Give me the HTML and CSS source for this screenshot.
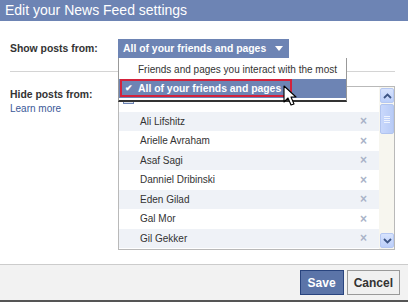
FILE: index.html
```html
<!DOCTYPE html>
<html>
<head>
<meta charset="utf-8"/>
<title>Edit your News Feed settings</title>
<link rel="stylesheet" href="styles.css">
</head>
<body>
<div class="dialog">
  <div class="dialog-title">Edit your News Feed settings</div>

  <div class="dialog-body">
    <div class="setting show-row">
      <div class="setting-label">Show posts from:</div>
      <div class="picker">
        <div class="picker-btn"><span>All of your friends and pages</span><span class="caret"></span></div>
        <ul class="picker-menu">
          <li>Friends and pages you interact with the most</li>
          <li class="selected"><span class="check">&#10004;</span><span class="selected-text">All of your friends and pages</span></li>
        </ul>
        <svg class="cursor" width="14" height="22" viewBox="0 0 14 22">
          <path d="M1 1 L1 17 L5 13 L8 20 L11 19 L8 12 L13 12 Z" fill="#fff" stroke="#000" stroke-width="1.1" stroke-linejoin="round"/>
        </svg>
      </div>
    </div>

    <div class="sep"></div>

    <div class="setting hide-row">
      <div class="setting-label">
        Hide posts from:
        <a class="learn-more" href="#">Learn more</a>
      </div>
      <div class="hidden-list">
        <div class="list-rows">
          <div class="list-row first"><span class="list-icon"></span></div>
          <div class="list-row alt"><span class="name">Ali Lifshitz</span><span class="remove">&#215;</span></div>
          <div class="list-row"><span class="name">Arielle Avraham</span><span class="remove">&#215;</span></div>
          <div class="list-row alt"><span class="name">Asaf Sagi</span><span class="remove">&#215;</span></div>
          <div class="list-row"><span class="name">Danniel Dribinski</span><span class="remove">&#215;</span></div>
          <div class="list-row alt"><span class="name">Eden Gilad</span><span class="remove">&#215;</span></div>
          <div class="list-row"><span class="name">Gal Mor</span><span class="remove">&#215;</span></div>
          <div class="list-row alt"><span class="name">Gil Gekker</span><span class="remove">&#215;</span></div>
        </div>
        <div class="scrollbar">
          <div class="scroll-btn">
            <svg width="9" height="6" viewBox="0 0 9 6"><path d="M1 5 L4.5 1.5 L8 5" fill="none" stroke="#3d5585" stroke-width="1.8"/></svg>
          </div>
          <div class="scroll-thumb"><span></span><span></span><span></span><span></span></div>
          <div class="scroll-track"></div>
          <div class="scroll-btn">
            <svg width="9" height="6" viewBox="0 0 9 6"><path d="M1 1 L4.5 4.5 L8 1" fill="none" stroke="#3d5585" stroke-width="1.8"/></svg>
          </div>
        </div>
      </div>
    </div>
  </div>

  <div class="dialog-footer">
    <button class="btn btn-save">Save</button>
    <button class="btn btn-cancel">Cancel</button>
  </div>
</div>
</body>
</html>
```

FILE: styles.css
```css
body {
    margin: 0;
    background: #fff;
    font-family: "Liberation Sans", Arial, sans-serif;
    font-size: 10px;
    color: #333;
}
.dialog {
    width: 408px;
    height: 302px;
    display: flex;
    flex-direction: column;
    overflow: hidden;
}
.dialog-title {
    height: 21px;
    line-height: 20px;
    background-color: #6d84b4;
    color: #fff;
    font-size: 14px;
    padding-left: 5px;
}
.dialog-body {
    flex: 1;
    padding: 0 13px 0 10px;
}
.setting {
    display: flex;
}
.setting-label {
    width: 108px;
    font-weight: bold;
    font-size: 10.4px;
    color: #333;
}
.show-row {
    margin-top: 18px;
    align-items: center;
}
.picker {
    position: relative;
}
.picker-btn {
    height: 19px;
    padding: 0 6px 0 5px;
    background-color: #6d84b4;
    color: #fff;
    font-weight: bold;
    font-size: 10.4px;
    white-space: nowrap;
    display: flex;
    align-items: center;
}
.caret {
    width: 0;
    height: 0;
    border-left: 4px solid transparent;
    border-right: 4px solid transparent;
    border-top: 5px solid #fff;
    margin-left: 9px;
}
.picker-menu {
    position: absolute;
    left: 0;
    top: 19px;
    width: 227px;
    margin: 0;
    padding: 0;
    list-style: none;
    background: #fff;
    border: 1px solid #999;
    border-top: none;
    border-bottom: 2px solid #333;
    z-index: 2;
}
.picker-menu li {
    height: 19px;
    line-height: 19px;
    padding-left: 19px;
    color: #333;
    white-space: nowrap;
}
.picker-menu li:first-child {
    height: 21px;
    line-height: 24px;
}
.picker-menu .selected {
    background-color: #6d84b4;
    color: #fff;
    font-weight: bold;
    font-size: 10.4px;
    padding-left: 0;
    display: flex;
    border-bottom: 2px solid #fff;
}
.selected .check {
    width: 172px;
    border: 2px solid #d3223c;
    box-sizing: border-box;
    height: 18px;
    margin-left: 1px;
    padding-left: 3px;
    font-size: 9px;
    display: flex;
    align-items: center;
}
.selected .selected-text {
    position: absolute;
    left: 19px;
}
.cursor {
    position: absolute;
    left: 165px;
    top: 46px;
    z-index: 3;
}
.sep {
    height: 1px;
    background-color: #d4d4d4;
    margin-top: 13px;
}
.hide-row {
    margin-top: 14px;
}
.hide-row .setting-label {
    padding-top: 2px;
    line-height: 13px;
}
.learn-more {
    display: block;
    margin-top: 1px;
    font-weight: normal;
    font-size: 10px;
    color: #3b5998;
    text-decoration: none;
}
.hidden-list {
    width: 275px;
    height: 162px;
    border: 1px solid #b9b9b9;
    display: flex;
    overflow: hidden;
}
.list-rows {
    flex: 1;
    padding-top: 5px;
}
.list-row {
    height: 19.5px;
    display: flex;
    align-items: center;
    padding-left: 21px;
    padding-right: 12px;
    color: #333;
}
.list-row.alt {
    background-color: #eff2f7;
}
.list-row.first {
    padding-left: 4px;
    align-items: flex-start;
}
.list-icon {
    width: 9px;
    height: 7px;
    margin-top: 3px;
    border: 1px solid #6d84b4;
    background: #d8dfea;
}
.name {
    flex: 1;
}
.remove {
    color: #a9b3c8;
    font-size: 12px;
    font-weight: bold;
}
.scrollbar {
    width: 14px;
    display: flex;
    flex-direction: column;
    background-color: #f7f6ef;
    padding-left: 1px;
}
.scroll-btn {
    height: 13px;
    margin: 1px 0;
    background: linear-gradient(#d7e3fd, #bccffa);
    border: 1px solid #b6c8f2;
    border-radius: 2px;
    display: flex;
    align-items: center;
    justify-content: center;
}
.scroll-thumb {
    height: 28px;
    background: linear-gradient(90deg, #c9d8fc, #b8cbf6);
    border: 1px solid #b1c4ef;
    border-radius: 2px;
    display: flex;
    flex-direction: column;
    align-items: center;
    justify-content: center;
    gap: 1px;
}
.scroll-thumb span {
    width: 6px;
    height: 1px;
    background-color: #eef3fe;
}
.scroll-track {
    flex: 1;
}
.dialog-footer {
    height: 35px;
    background-color: #f2f2f2;
    border-top: 1px solid #cccccc;
    border-bottom: 2px solid #555;
    display: flex;
    justify-content: flex-end;
    align-items: center;
    padding-right: 8px;
    gap: 3px;
}
.btn {
    height: 25px;
    font-family: "Liberation Sans", Arial, sans-serif;
    font-size: 12px;
    font-weight: bold;
    padding: 0 6px;
    cursor: pointer;
}
.btn-save {
    background-color: #5b74a8;
    border: 1px solid #29447e;
    color: #fff;
    padding: 0 7px;
}
.btn-cancel {
    background-color: #f0f0f0;
    border: 1px solid #999;
    color: #333;
}
```
